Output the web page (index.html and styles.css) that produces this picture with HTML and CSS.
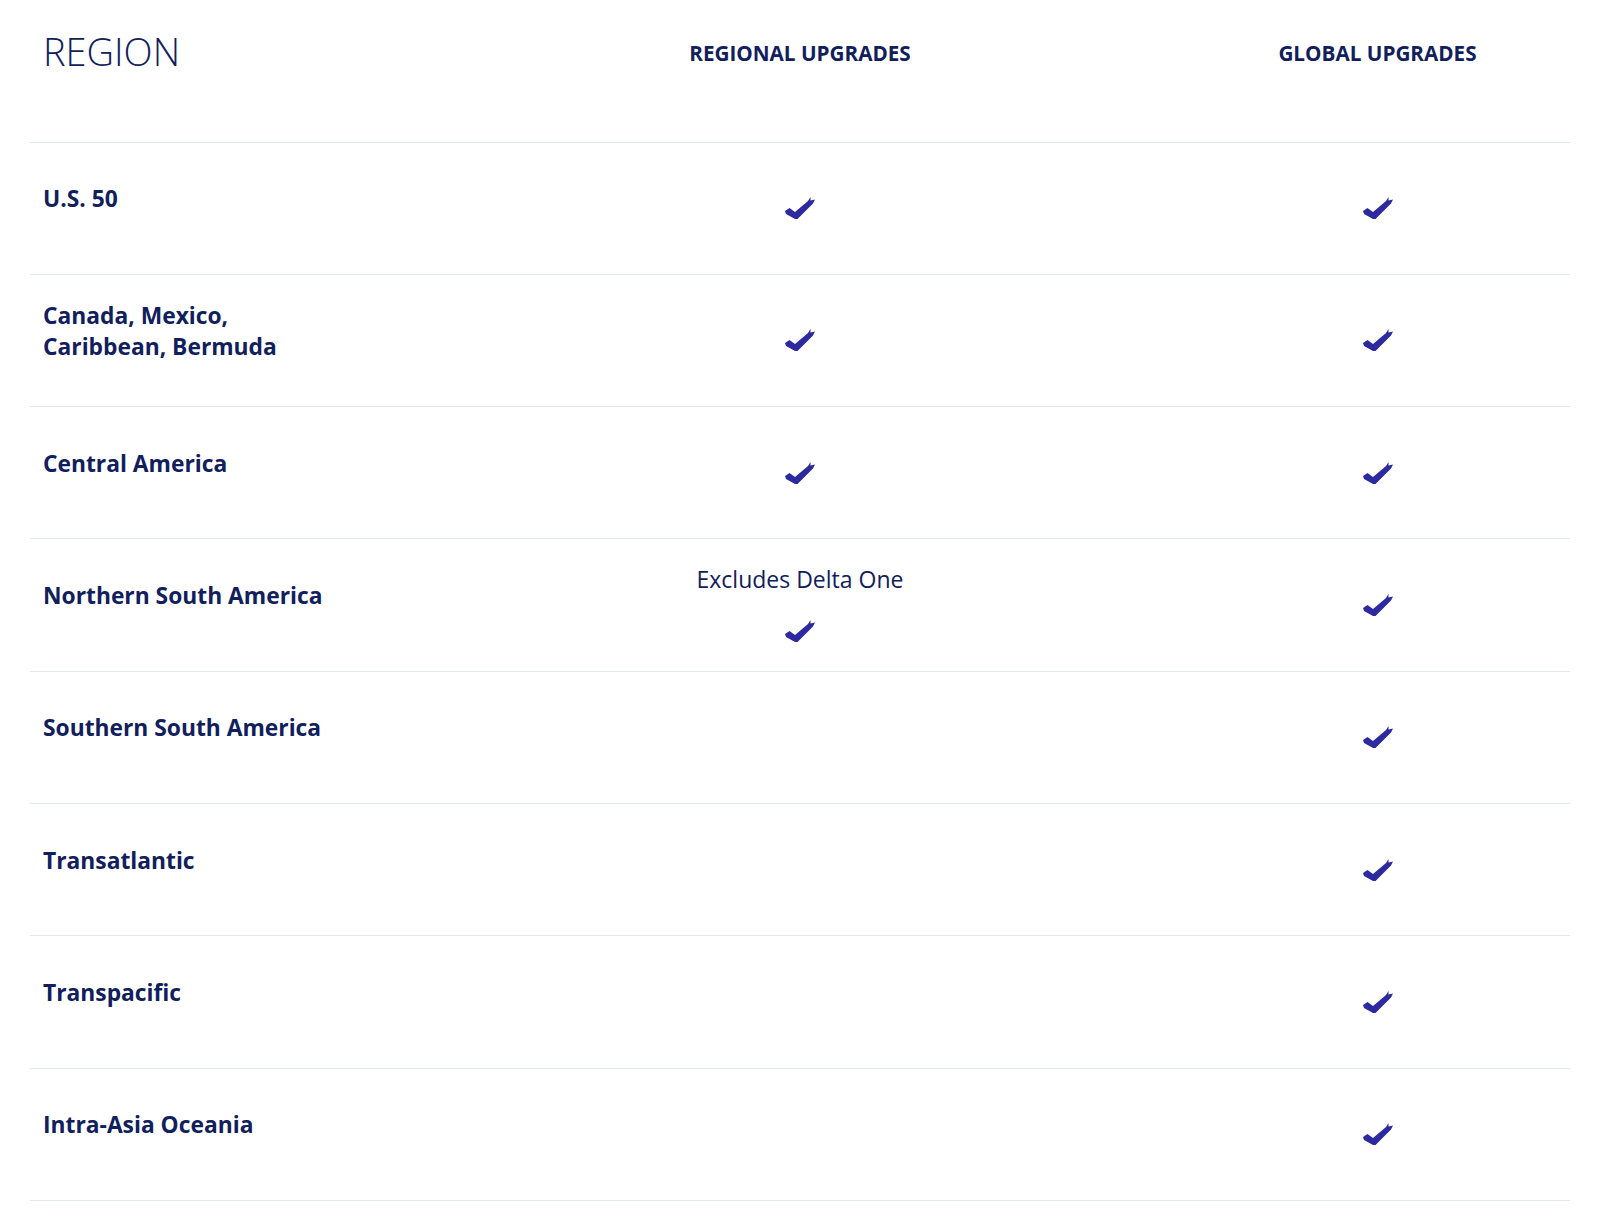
FILE: index.html
```html
<!DOCTYPE html>
<html lang="en">
<head>
<meta charset="utf-8">
<title>Upgrade regions</title>
<link rel="stylesheet" href="styles.css">
</head>
<body>
<svg class="defs" width="0" height="0" aria-hidden="true">
  <symbol id="chk" viewBox="0 0 30 22">
    <path d="M0,14 L4.5,11 L10,15 L23,4 L25.5,0 L25.5,3.5 L30,2.5 L28,6.5 L12.5,22 L10,22 L1,17 Z"/>
  </symbol>
</svg>
<div class="table">
  <div class="head">
    <div class="h-region">REGION</div>
    <div class="h-col">REGIONAL UPGRADES</div>
    <div class="h-col">GLOBAL UPGRADES</div>
  </div>

  <div class="row">
    <div class="name">U.S. 50</div>
    <div class="cell"><svg class="check"><use href="#chk"/></svg></div>
    <div class="cell"><svg class="check"><use href="#chk"/></svg></div>
  </div>
  <div class="row">
    <div class="name">Canada, Mexico,<br>Caribbean, Bermuda</div>
    <div class="cell"><svg class="check"><use href="#chk"/></svg></div>
    <div class="cell"><svg class="check"><use href="#chk"/></svg></div>
  </div>
  <div class="row">
    <div class="name">Central America</div>
    <div class="cell"><svg class="check"><use href="#chk"/></svg></div>
    <div class="cell"><svg class="check"><use href="#chk"/></svg></div>
  </div>
  <div class="row">
    <div class="name">Northern South America</div>
    <div class="cell cell-note">
      <div class="note">Excludes Delta One</div>
      <svg class="check"><use href="#chk"/></svg>
    </div>
    <div class="cell"><svg class="check"><use href="#chk"/></svg></div>
  </div>
  <div class="row">
    <div class="name">Southern South America</div>
    <div class="cell"></div>
    <div class="cell"><svg class="check"><use href="#chk"/></svg></div>
  </div>
  <div class="row">
    <div class="name">Transatlantic</div>
    <div class="cell"></div>
    <div class="cell"><svg class="check"><use href="#chk"/></svg></div>
  </div>
  <div class="row">
    <div class="name">Transpacific</div>
    <div class="cell"></div>
    <div class="cell"><svg class="check"><use href="#chk"/></svg></div>
  </div>
  <div class="row">
    <div class="name">Intra-Asia Oceania</div>
    <div class="cell"></div>
    <div class="cell"><svg class="check"><use href="#chk"/></svg></div>
  </div>
</div>
</body>
</html>
```
FILE: styles.css
```css
html, body {
  margin: 0;
  padding: 0;
  background: #ffffff;
}
body {
  font-family: "Open Sans", "Liberation Sans", sans-serif;
  color: #11205c;
}
.defs {
  position: absolute;
  width: 0;
  height: 0;
}
.table {
  margin: 0 30px 0 30px;
}
.head {
  display: grid;
  grid-template-columns: 1fr 2fr 1fr;
  height: 141.5px;
  border-bottom: 1px solid #e3e7ef;
  box-sizing: content-box;
}
.h-region {
  padding: 29px 0 0 13px;
  font-size: 38px;
  font-weight: 300;
  line-height: 1.2;
}
.h-col {
  padding-top: 41px;
  text-align: center;
  font-size: 20.7px;
  font-weight: 700;
  line-height: 1.2;
}
.row {
  display: grid;
  grid-template-columns: 1fr 2fr 1fr;
  align-items: center;
  height: 131.3px;
  border-bottom: 1px solid #e3e7ef;
  box-sizing: content-box;
}
.name {
  padding: 0 0 19px 13px;
  font-size: 22.8px;
  font-weight: 700;
  line-height: 31px;
}
.cell {
  display: flex;
  flex-direction: column;
  align-items: center;
}
.cell-note {
  padding-bottom: 4px;
}
.note {
  font-size: 23px;
  font-weight: 400;
  line-height: 30px;
  margin-bottom: 26px;
}
.check {
  width: 30px;
  height: 22px;
  fill: #2c2a9e;
}
```
